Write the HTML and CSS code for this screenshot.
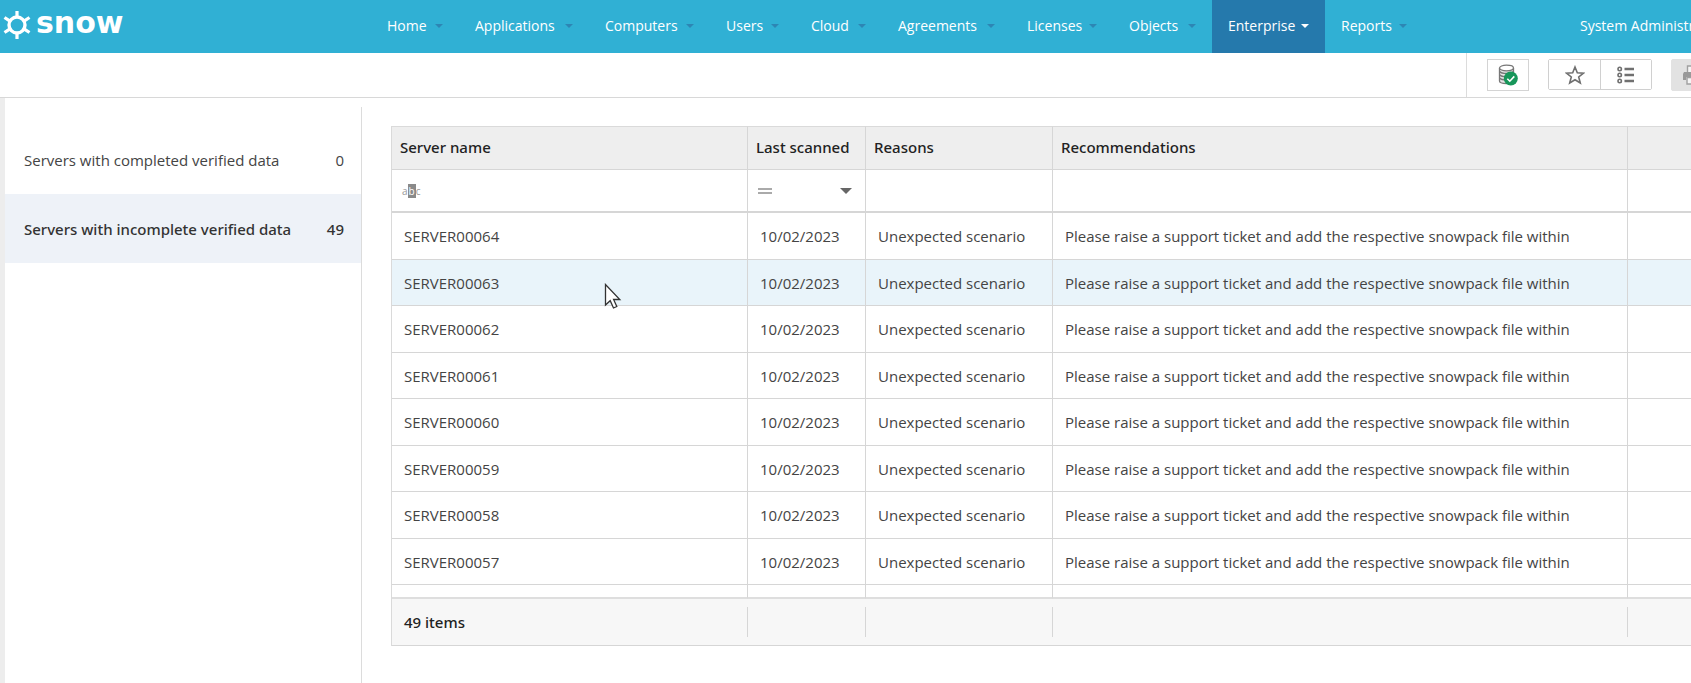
FILE: index.html
```html
<!DOCTYPE html>
<html lang="en">
<head>
  <meta charset="UTF-8">
  <meta name="viewport" content="width=device-width, initial-scale=1.0">
  <title>Snow License Manager – Verified data</title>
  <link rel="stylesheet" href="styles.css">
</head>
<body>

  <header class="topbar">
    <a href="#" class="brand">
      <svg class="brand-icon" viewBox="0 0 28 28" fill="none" stroke="#fff">
        <circle cx="14" cy="14" r="8" stroke-width="3.4"/>
        <path d="M14 0v6M14 22v6M1.500 6.500l5.500 3.700M26.500 6.500l-5.500 3.700M1.500 21.500l5.500-3.700M26.500 21.500l-5.500-3.700" stroke-width="3.2"/>
      </svg>
      <span>snow</span>
    </a>
    <nav class="menu">
      <a href="#">Home</a>
      <a href="#">Applications</a>
      <a href="#">Computers</a>
      <a href="#">Users</a>
      <a href="#">Cloud</a>
      <a href="#">Agreements</a>
      <a href="#">Licenses</a>
      <a href="#">Objects</a>
      <a href="#" class="active">Enterprise</a>
      <a href="#">Reports</a>
    </nav>
    <a href="#" class="user">System Administrator</a>
  </header>

  <div class="toolbar">
    <div class="tools">
      <button class="tool" aria-label="Verified data">
        <svg width="20" height="22" viewBox="0 0 20 22">
          <path d="M1.500 4v13c0 1.600 3.200 2.500 7 2.500s7-.9 7-2.500V4" fill="#e4e4e4" stroke="#777" stroke-width="1.300"/>
          <path d="M1.500 7.500c1.500 1.600 4 2 7 2s5.500-.4 7-2M1.500 10.800c1.500 1.600 4 2 7 2s5.500-.4 7-2M1.500 14.100c1.500 1.600 4 2 7 2" fill="none" stroke="#777" stroke-width="1.500"/>
          <ellipse cx="8.500" cy="4" rx="7" ry="2.800" fill="#fff" stroke="#777" stroke-width="1.300"/>
          <circle cx="12.800" cy="14.500" r="7" fill="#17965a"/>
          <path d="M9.300 14.700l2.500 2.500 4.500-4.800" fill="none" stroke="#fff" stroke-width="1.600"/>
        </svg>
      </button>
      <div class="tool-group">
        <button class="tool" aria-label="Add to favourites">
          <svg width="20" height="20" viewBox="0 0 20 20" fill="none" stroke="#707070" stroke-width="1.600">
            <path d="M10 2l2.300 5.700 6.200.4-4.800 3.900 1.600 6L10 14.700 4.700 18l1.600-6L1.500 8.100l6.200-.4z"/>
          </svg>
        </button>
        <button class="tool" aria-label="Select criteria">
          <svg width="18" height="18" viewBox="0 0 18 18" fill="none" stroke="#707070">
            <path d="M7.500 3H17M7.500 9H17M7.500 15H17" stroke-width="2.400"/>
            <circle cx="2.700" cy="3" r="1.700" stroke-width="1.600"/>
            <circle cx="2.700" cy="9" r="1.700" stroke-width="1.600"/>
            <circle cx="2.700" cy="15" r="1.700" stroke-width="1.600"/>
          </svg>
        </button>
      </div>
      <button class="tool print" aria-label="Print" disabled>
        <svg width="20" height="20" viewBox="0 0 20 20">
          <path d="M5.500 8V1h7l3 3v4" fill="#f5f5f5" stroke="#a0a0a0" stroke-width="1.400"/>
          <path d="M2 7h16l1 2v6h-3v-3H4v3H1V9z" fill="#999"/>
          <path d="M5 12.500h10V19H5z" fill="#f5f5f5" stroke="#a0a0a0" stroke-width="1.400"/>
        </svg>
      </button>
    </div>
  </div>

  <div class="page">
    <aside class="sidebar">
      <a href="#" class="side-item"><span>Servers with completed verified data</span><span>0</span></a>
      <a href="#" class="side-item selected"><span>Servers with incomplete verified data</span><span>49</span></a>
    </aside>

    <main class="content">
      <table class="grid">
        <colgroup>
          <col class="col-name">
          <col class="col-date">
          <col class="col-reason">
          <col class="col-rec">
          <col>
        </colgroup>
        <thead>
          <tr>
            <th>Server name</th>
            <th>Last scanned</th>
            <th>Reasons</th>
            <th>Recommendations</th>
            <th></th>
          </tr>
          <tr class="filters">
            <td>
              <div class="filter">
                <label for="nameFilter" class="abc">a<b>b</b>c</label>
                <input type="text" id="nameFilter" aria-label="Filter server name">
              </div>
            </td>
            <td>
              <div class="filter">
                <label for="dateFilter" class="equals"></label>
                <input type="text" id="dateFilter" aria-label="Filter last scanned">
                <button class="pick" aria-label="Pick a date"></button>
              </div>
            </td>
            <td></td>
            <td></td>
            <td></td>
          </tr>
        </thead>
        <tbody>
          <tr>
            <td>SERVER00064</td>
            <td>10/02/2023</td>
            <td>Unexpected scenario</td>
            <td>Please raise a support ticket and add the respective snowpack file within</td>
            <td></td>
          </tr>
          <tr class="hover">
            <td>
              SERVER00063
              <svg class="cursor" width="18" height="27" viewBox="0 0 18 27">
                <path d="M1.500 1.500v20.500l4.700-4.300 3.300 7.300 3.300-1.500-3.200-7h6.200z" fill="#fff" stroke="#333" stroke-width="1.300"/>
              </svg>
            </td>
            <td>10/02/2023</td>
            <td>Unexpected scenario</td>
            <td>Please raise a support ticket and add the respective snowpack file within</td>
            <td></td>
          </tr>
          <tr>
            <td>SERVER00062</td>
            <td>10/02/2023</td>
            <td>Unexpected scenario</td>
            <td>Please raise a support ticket and add the respective snowpack file within</td>
            <td></td>
          </tr>
          <tr>
            <td>SERVER00061</td>
            <td>10/02/2023</td>
            <td>Unexpected scenario</td>
            <td>Please raise a support ticket and add the respective snowpack file within</td>
            <td></td>
          </tr>
          <tr>
            <td>SERVER00060</td>
            <td>10/02/2023</td>
            <td>Unexpected scenario</td>
            <td>Please raise a support ticket and add the respective snowpack file within</td>
            <td></td>
          </tr>
          <tr>
            <td>SERVER00059</td>
            <td>10/02/2023</td>
            <td>Unexpected scenario</td>
            <td>Please raise a support ticket and add the respective snowpack file within</td>
            <td></td>
          </tr>
          <tr>
            <td>SERVER00058</td>
            <td>10/02/2023</td>
            <td>Unexpected scenario</td>
            <td>Please raise a support ticket and add the respective snowpack file within</td>
            <td></td>
          </tr>
          <tr>
            <td>SERVER00057</td>
            <td>10/02/2023</td>
            <td>Unexpected scenario</td>
            <td>Please raise a support ticket and add the respective snowpack file within</td>
            <td></td>
          </tr>
          <tr class="cut">
            <td></td>
            <td></td>
            <td></td>
            <td></td>
            <td></td>
          </tr>
        </tbody>
        <tfoot>
          <tr>
            <td><div>49 items</div></td>
            <td><div></div></td>
            <td><div></div></td>
            <td><div></div></td>
            <td></td>
          </tr>
        </tfoot>
      </table>
    </main>
  </div>

</body>
</html>
```
FILE: styles.css
```css
* {
  box-sizing: border-box;
}

body {
  margin: 0;
  min-height: 100vh;
  display: flex;
  flex-direction: column;
  overflow: hidden;
  background-color: #fff;
  color: #444;
  font-family: "Segoe UI", "Open Sans", sans-serif;
  font-size: 15px;
}

a {
  color: inherit;
  text-decoration: none;
}

button {
  padding: 0;
  font: inherit;
  cursor: pointer;
}

/* top navigation */
.topbar {
  display: flex;
  height: 53px;
  flex-shrink: 0;
  background-color: #30b0d4;
  color: #fff;
  font-size: 14px;
}

.brand {
  display: flex;
  width: 371px;
  flex-shrink: 0;
  padding: 11px 0 0 3px;
  gap: 5px;
  font-family: "DejaVu Sans", Verdana, sans-serif;
  font-size: 30px;
  font-weight: bold;
  line-height: 24px;
}

.brand-icon {
  width: 28px;
  height: 28px;
}

.menu {
  display: grid;
  grid-template-columns: 88px 130px 121px 85px 87px 129px 102px 99px 113px 98px;
}

.menu a {
  display: flex;
  align-items: center;
  justify-content: space-between;
  padding: 0 16px 2px;
}

.menu a::after {
  content: "";
  border: 4px solid transparent;
  border-top-color: #2d86b4;
  border-bottom: 0;
}

.menu a.active {
  background-color: #2579ac;
}

.menu a.active::after {
  border-top-color: #fff;
}

.user {
  width: 111px;
  margin-left: auto;
  padding-bottom: 2px;
  line-height: 51px;
  white-space: nowrap;
  overflow: hidden;
}

/* toolbar */
.toolbar {
  display: flex;
  justify-content: flex-end;
  height: 45px;
  flex-shrink: 0;
  border-bottom: 1px solid #d8d8d8;
}

.tools {
  display: flex;
  align-items: flex-start;
  gap: 19px;
  width: 225px;
  padding: 6px 0 0 20px;
  border-left: 1px solid #dcdcdc;
  overflow: hidden;
}

.tool {
  display: flex;
  align-items: center;
  justify-content: center;
  width: 42px;
  height: 32px;
  flex-shrink: 0;
  border: 1px solid #d4d4d4;
  background-color: #fff;
}

.tool-group {
  display: flex;
  flex-shrink: 0;
  border: 1px solid #d0d0d0;
  border-radius: 2px;
}

.tool-group .tool {
  width: 51px;
  height: 29px;
  border: 0;
}

.tool-group .tool + .tool {
  border-left: 1px solid #d0d0d0;
}

.tool.print {
  border-color: #e2e2e2;
  border-radius: 2px;
  background-color: #e2e2e2;
}

/* page */
.page {
  display: flex;
  flex: 1;
  border-left: 5px solid #ededed;
}

.sidebar {
  width: 357px;
  flex-shrink: 0;
  margin-top: 9px;
  padding-top: 18px;
  border-right: 1px solid #dcdcdc;
}

.side-item {
  display: flex;
  align-items: center;
  justify-content: space-between;
  height: 69px;
  padding: 0 17px 0 19px;
}

.side-item.selected {
  background-color: #eef2f8;
  color: #333;
  font-family: "Segoe UI", "Noto Sans", sans-serif;
  font-weight: 500;
}

.content {
  flex: 1;
  min-width: 0;
  padding: 28px 0 0 29px;
}

/* server table */
.grid {
  width: 100%;
  table-layout: fixed;
  border-spacing: 0;
  border-left: 1px solid #dadada;
}

.col-name {
  width: 356px;
}

.col-date {
  width: 118px;
}

.col-reason {
  width: 187px;
}

.col-rec {
  width: 575px;
}

.grid th,
.grid td {
  padding: 0 0 0 12px;
  border-right: 1px solid #d6d6d6;
  border-bottom: 1px solid #d6d6d6;
  text-align: left;
  white-space: nowrap;
}

.grid th:last-child,
.grid td:last-child {
  border-right: 0;
}

.grid th {
  height: 44px;
  padding: 0 0 2px 8px;
  border-top: 1px solid #dadada;
  background-color: #eee;
  color: #222;
  font-family: "Segoe UI", "Noto Sans", sans-serif;
  font-weight: 500;
}

.grid .filters td {
  height: 43px;
  padding: 0 8px;
  border-bottom-width: 2px;
}

.grid tbody tr:nth-child(odd) td {
  height: 47px;
}

.grid tbody tr:nth-child(even) td {
  height: 46px;
}

.grid tbody .hover td {
  position: relative;
  background-color: #e9f4fa;
}

.grid tbody .cut td,
.grid tbody .cut:nth-child(odd) td {
  height: 14px;
  border-bottom: 2px solid #dedede;
}

.grid tfoot td {
  height: 47px;
  padding: 8px 0;
  border-right: 0;
  background-color: #f7f7f7;
  color: #222;
  font-family: "Segoe UI", "Noto Sans", sans-serif;
  font-weight: 500;
}

.grid tfoot div {
  height: 30px;
  padding-left: 12px;
  border-right: 1px solid #d6d6d6;
  line-height: 30px;
}

.filter {
  display: flex;
  align-items: center;
  gap: 4px;
}

.filter input {
  flex: 1;
  min-width: 0;
  height: 28px;
  padding: 0;
  border: 0;
  background: transparent;
  font: inherit;
  outline: none;
}

.abc {
  padding-left: 2px;
  color: #999;
  font-size: 10px;
  line-height: 12px;
}

.abc b {
  padding: 0 1px;
  background-color: #8a8a8a;
  color: #fff;
  font-weight: normal;
}

.equals {
  width: 14px;
  height: 6px;
  margin-left: 2px;
  border: solid #aaa;
  border-width: 2px 0;
}

.pick {
  width: 12px;
  height: 6px;
  margin-right: 5px;
  border: 6px solid transparent;
  border-top-color: #666;
  border-bottom: 0;
  background: none;
}

.cursor {
  position: absolute;
  left: 212px;
  top: 23px;
}
```
